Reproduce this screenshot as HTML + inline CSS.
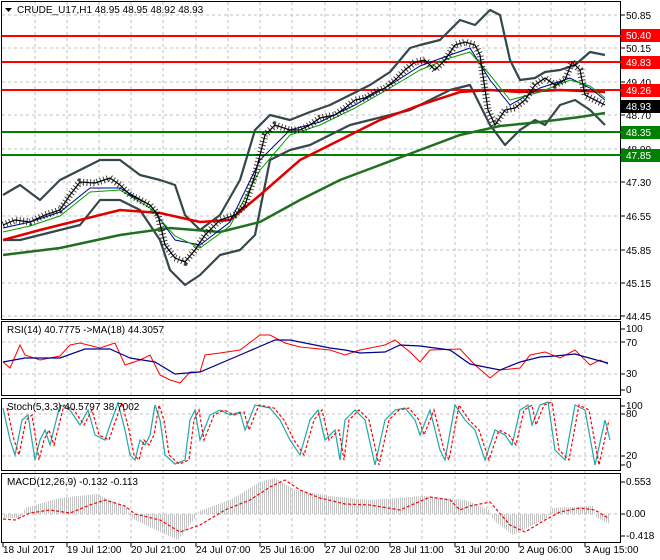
<!DOCTYPE html>
<html><head><meta charset="utf-8"><style>
html,body{margin:0;padding:0;background:#fff;width:660px;height:560px;overflow:hidden}
svg{display:block;font-family:"Liberation Sans",sans-serif;font-size:10px}
</style></head><body>
<svg width="660" height="560" viewBox="0 0 660 560">
<defs>
<pattern id="hb" width="2" height="4" patternUnits="userSpaceOnUse"><rect x="0" y="0" width="1" height="4" fill="#c4c4c4"/></pattern>
</defs>
<rect width="660" height="560" fill="#fff"/>
<g stroke="#c0c0c0" stroke-dasharray="3,3" stroke-width="1">
<path d="M35 2V543M67 2V543M99 2V543M131 2V543M163 2V543M196 2V543M228 2V543M260 2V543M292 2V543M325 2V543M357 2V543M390 2V543M422 2V543M455 2V543M487 2V543M519 2V543M551 2V543M585 2V543"/>
<path d="M2 15H621M2 48H621M2 82H621M2 115H621M2 149H621M2 182H621M2 216H621M2 250H621M2 283H621M2 316H621"/>
<path d="M2 342H621M2 374H621M2 414H621M2 456H621M2 514H621"/>
</g>
<g fill="none" stroke="#000" stroke-width="1">
<rect x="1.5" y="1.5" width="619" height="318"/>
<rect x="1.5" y="321.5" width="619" height="74"/>
<rect x="1.5" y="398.5" width="619" height="72"/>
<rect x="1.5" y="473.5" width="619" height="69"/>
</g>
<g stroke="#000"><path d="M621 15h4M621 48h4M621 82h4M621 115h4M621 149h4M621 182h4M621 216h4M621 250h4M621 283h4M621 316h4M621 329h4M621 342h4M621 374h4M621 390h4M621 406h4M621 414h4M621 456h4M621 465h4M621 482h4M621 514h4M621 536h4M3 543v4M67 543v4M131 543v4M196 543v4M260 543v4M325 543v4M390 543v4M455 543v4M519 543v4M585 543v4"/></g>
<g stroke-width="2"><path d="M2 36H621M2 62H621M2 90H621" stroke="#f00"/><path d="M2 132H621M2 155H621" stroke="#008000"/></g>
<g fill="none" stroke="#34474a" stroke-width="2.2" stroke-linejoin="round">
<polyline points="3,195 20,185 40,200 60,180 80,170 100,160 120,160 140,175 160,180 175,185 185,215 200,230 220,215 240,180 255,130 270,115 290,120 310,112 330,105 350,95 370,85 390,72 410,48 420,45 440,40 460,20 475,25 490,10 500,15 510,60 520,80 535,78 545,72 560,70 575,65 590,52 605,55"/>
<polyline points="3,240 20,240 40,235 60,230 80,225 100,200 120,200 140,210 160,240 170,270 185,285 200,275 220,255 240,250 255,235 270,160 290,150 310,145 330,135 350,125 370,120 390,115 410,110 430,100 450,90 470,85 490,125 505,145 520,130 535,120 545,125 560,105 575,100 590,110 605,125"/>
</g>
<polyline fill="none" stroke="#e00000" stroke-width="2.5" points="3,240 40,230 80,220 120,210 160,213 200,222 230,220 260,195 300,160 340,140 380,120 420,105 460,92 490,90 520,92 560,90 605,92"/>
<polyline fill="none" stroke="#207020" stroke-width="2.5" points="3,255 60,248 120,235 170,228 220,232 260,222 300,200 340,180 380,165 420,150 460,135 500,126 540,122 580,117 605,113"/>
<polyline fill="none" stroke="#00008b" stroke-width="1" points="3,228 30,222 60,212 90,188 120,188 150,205 175,240 200,245 230,222 260,160 290,130 320,122 355,105 390,85 420,66 450,55 470,48 490,80 510,105 540,88 570,78 590,88 605,100"/>
<polyline fill="none" stroke="#00a000" stroke-width="1" points="3,232 30,226 60,216 90,192 120,190 150,208 175,236 200,248 230,226 260,170 290,135 320,125 355,108 390,88 420,70 450,58 470,52 490,75 510,100 540,92 570,80 590,86 605,98"/>
<polyline fill="none" stroke="#000" stroke-width="7" stroke-dasharray="1,2.5" opacity="0.75" points="3,225 15,220 30,222 45,215 60,210 70,195 80,182 95,183 110,178 120,185 130,195 140,200 150,205 158,215 165,245 175,258 185,262 195,250 205,235 220,220 235,215 245,205 255,175 265,135 275,125 290,130 300,130 310,125 320,118 335,115 345,108 355,100 365,98 375,92 385,88 395,80 405,70 415,62 425,60 435,70 445,60 455,45 465,42 475,45 480,55 488,110 495,125 505,110 515,108 525,100 535,85 545,78 555,85 565,80 572,62 580,70 585,95 595,100 605,105"/>
<polyline fill="none" stroke="#000" stroke-width="1.2" points="3,225 15,220 30,222 45,215 60,210 70,195 80,182 95,183 110,178 120,185 130,195 140,200 150,205 158,215 165,245 175,258 185,262 195,250 205,235 220,220 235,215 245,205 255,175 265,135 275,125 290,130 300,130 310,125 320,118 335,115 345,108 355,100 365,98 375,92 385,88 395,80 405,70 415,62 425,60 435,70 445,60 455,45 465,42 475,45 480,55 488,110 495,125 505,110 515,108 525,100 535,85 545,78 555,85 565,80 572,62 580,70 585,95 595,100 605,105"/>
<polyline fill="none" stroke="#f00" stroke-width="1" points="3,362 10,368 20,345 25,355 40,360 60,356 70,345 80,343 100,348 115,343 125,365 140,360 150,355 160,375 170,380 180,383 190,372 200,372 205,355 220,353 240,350 260,335 270,335 285,343 300,347 330,350 345,355 360,350 385,345 395,340 410,352 420,362 430,350 460,349 475,365 490,378 500,370 520,368 530,355 545,352 560,358 575,350 590,365 600,360 608,364"/>
<polyline fill="none" stroke="#00008b" stroke-width="1.2" points="3,362 25,358 60,358 85,349 110,349 130,358 155,362 175,374 200,372 240,355 275,340 290,340 330,348 345,350 360,353 385,352 400,345 420,346 450,350 470,364 500,370 520,362 540,357 555,356 575,354 600,361 608,363"/>
<polyline fill="none" stroke="#20a8a8" stroke-width="1.2" points="3,408 10,440 15,455 22,420 28,415 35,460 40,440 45,430 50,445 60,405 70,410 80,425 88,410 95,435 105,440 110,425 118,403 125,430 130,455 135,460 140,440 145,445 150,435 155,405 160,420 165,455 175,464 185,460 190,420 195,410 200,440 210,415 220,410 230,415 240,412 245,430 255,405 270,408 280,420 290,440 300,455 310,420 318,410 325,440 335,430 340,460 345,420 355,410 365,420 375,465 385,420 395,410 405,408 415,420 420,435 430,410 440,450 445,460 455,405 465,420 475,430 485,460 495,430 505,435 512,445 520,410 528,405 532,425 540,405 548,402 555,450 565,460 575,405 585,410 595,465 605,420 610,440"/>
<polyline fill="none" stroke="#f00" stroke-width="1.2" stroke-dasharray="3,2" points="7,408 14,440 19,455 26,420 32,415 39,460 44,440 49,430 54,445 64,405 74,410 84,425 92,410 99,435 109,440 114,425 122,403 129,430 134,455 139,460 144,440 149,445 154,435 159,405 164,420 169,455 179,464 189,460 194,420 199,410 204,440 214,415 224,410 234,415 244,412 249,430 259,405 274,408 284,420 294,440 304,455 314,420 322,410 329,440 339,430 344,460 349,420 359,410 369,420 379,465 389,420 399,410 409,408 419,420 424,435 434,410 444,450 449,460 459,405 469,420 479,430 489,460 499,430 509,435 516,445 524,410 532,405 536,425 544,405 552,402 559,450 569,460 579,405 589,410 599,465 609,420"/>
<polygon fill="url(#hb)" points="3,514 3,518 21,518 23,514 25,508 60,498 97,494 127,508 129,514 131,518 160,532 178,540 195,518 197,514 199,511 230,500 260,482 275,478 295,490 330,496 370,500 424,496 466,500 489,510 491,514 493,520 513,535 547,518 549,514 551,508 593,506 595,514 597,518 610,524 610,514"/>
<polyline fill="none" stroke="#f00" stroke-width="1.2" stroke-dasharray="3,2" points="3,519 15,520 30,513 50,510 70,513 90,505 105,500 125,506 135,514 160,520 180,532 200,525 225,510 250,500 270,487 285,480 300,490 320,498 345,504 370,505 400,510 430,497 450,500 460,510 470,506 490,502 510,525 525,532 545,520 560,512 580,508 595,510 608,518"/>
<g font-size="10" fill="#000">
<text x="626" y="19">50.85</text><text x="626" y="52">50.15</text><text x="626" y="86">49.40</text><text x="626" y="119">48.70</text><text x="626" y="153">48.00</text><text x="626" y="186">47.30</text><text x="626" y="220">46.55</text><text x="626" y="254">45.85</text><text x="626" y="287">45.15</text><text x="626" y="320">44.45</text>
<text x="626" y="332">100</text><text x="626" y="346">70</text><text x="626" y="377">30</text><text x="626" y="393">0</text>
<text x="626" y="409">100</text><text x="626" y="417">80</text><text x="626" y="459">20</text><text x="626" y="468">0</text>
<text x="626" y="485">0.553</text><text x="626" y="517">0.00</text><text x="626" y="539">-0.418</text>
</g>
<g font-size="10" fill="#fff">
<rect x="621" y="29" width="39" height="13" fill="#f00"/><text x="626" y="39">50.40</text>
<rect x="621" y="56" width="39" height="13" fill="#f00"/><text x="626" y="66">49.83</text>
<rect x="621" y="84" width="39" height="13" fill="#f00"/><text x="626" y="94">49.26</text>
<rect x="621" y="100" width="39" height="13" fill="#000"/><text x="626" y="110">48.93</text>
<rect x="621" y="126" width="39" height="13" fill="#008000"/><text x="626" y="136">48.35</text>
<rect x="621" y="149" width="39" height="13" fill="#008000"/><text x="626" y="159">47.85</text>
</g>
<g font-size="10" fill="#000">
<path d="M5 8h7l-3.5 4z" fill="#000"/>
<text x="17" y="13">CRUDE_U17,H1  48.95 48.95 48.92 48.93</text>
<text x="7" y="333">RSI(14) 40.7775  -&gt;MA(18) 44.3057</text>
<text x="7" y="410">Stoch(5,3,3) 40.5797 38.7002</text>
<text x="7" y="485">MACD(12,26,9) -0.132 -0.113</text>
<text x="3" y="553">18 Jul 2017</text><text x="67" y="553">19 Jul 12:00</text><text x="131" y="553">20 Jul 21:00</text><text x="196" y="553">24 Jul 07:00</text><text x="260" y="553">25 Jul 16:00</text><text x="325" y="553">27 Jul 02:00</text><text x="390" y="553">28 Jul 11:00</text><text x="455" y="553">31 Jul 20:00</text><text x="519" y="553">2 Aug 06:00</text><text x="585" y="553">3 Aug 15:00</text>
</g>
</svg>
</body></html>
